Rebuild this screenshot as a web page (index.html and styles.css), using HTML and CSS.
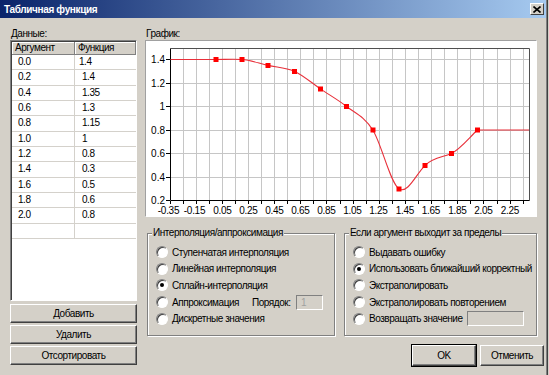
FILE: index.html
```html
<!DOCTYPE html>
<html lang="ru">
<head>
    <meta charset="UTF-8">
    <meta name="viewport" content="width=device-width, initial-scale=1.0">
    <title>Табличная функция</title>

    <link rel="stylesheet" href="styles.css">
</head>
<body>
    <div class="window">
        <!-- title bar -->
        <div class="titlebar">
            <span>Табличная функция</span>
            <span class="close">
                <svg width="8" height="7" viewBox="0 0 8 7"><path d="M0.5 0.5L7.5 6.5M7.5 0.5L0.5 6.5" stroke="#000" stroke-width="1.6"/></svg>
            </span>
        </div>

        <div class="main">
            <!-- data table -->
            <div class="left">
                <div class="caption">Данные:</div>
                <div class="grid">
                    <div class="row head">
                        <div class="cell c1">Аргумент</div>
                        <div class="cell c2">Функция</div>
                    </div>
                    <div class="row"><div class="cell c1">0.0</div><div class="cell c2 edit">1.4</div></div>
                    <div class="row"><div class="cell c1">0.2</div><div class="cell c2">1.4</div></div>
                    <div class="row"><div class="cell c1">0.4</div><div class="cell c2">1.35</div></div>
                    <div class="row"><div class="cell c1">0.6</div><div class="cell c2">1.3</div></div>
                    <div class="row"><div class="cell c1">0.8</div><div class="cell c2">1.15</div></div>
                    <div class="row"><div class="cell c1">1.0</div><div class="cell c2">1</div></div>
                    <div class="row"><div class="cell c1">1.2</div><div class="cell c2">0.8</div></div>
                    <div class="row"><div class="cell c1">1.4</div><div class="cell c2">0.3</div></div>
                    <div class="row"><div class="cell c1">1.6</div><div class="cell c2">0.5</div></div>
                    <div class="row"><div class="cell c1">1.8</div><div class="cell c2">0.6</div></div>
                    <div class="row"><div class="cell c1">2.0</div><div class="cell c2">0.8</div></div>
                    <div class="row"><div class="cell c1"></div><div class="cell c2"></div></div>
                </div>
                <div class="stack">
                    <div class="btn">Добавить</div>
                    <div class="btn">Удалить</div>
                    <div class="btn">Отсортировать</div>
                </div>
            </div>

            <div class="right">
                <div class="caption">График:</div>
                <!-- chart -->
                <div class="chart">
                    <svg width="390" height="175" viewBox="146 41 390 175">
                        <path fill="none" stroke="#c6c6c6" d="M183.5 48.5V200.5M196.5 48.5V200.5M209.5 48.5V200.5M222.5 48.5V200.5M235.5 48.5V200.5M248.5 48.5V200.5M261.5 48.5V200.5M274.5 48.5V200.5M287.5 48.5V200.5M300.5 48.5V200.5M313.5 48.5V200.5M326.5 48.5V200.5M340.5 48.5V200.5M353.5 48.5V200.5M366.5 48.5V200.5M379.5 48.5V200.5M392.5 48.5V200.5M405.5 48.5V200.5M418.5 48.5V200.5M431.5 48.5V200.5M444.5 48.5V200.5M457.5 48.5V200.5M470.5 48.5V200.5M483.5 48.5V200.5M497.5 48.5V200.5M510.5 48.5V200.5M523.5 48.5V200.5M170.5 59.5H529.5M170.5 83.5H529.5M170.5 106.5H529.5M170.5 130.5H529.5M170.5 153.5H529.5M170.5 177.5H529.5"/>
                        <path fill="none" stroke="#505050" d="M170.5 48.5H529.5V200.5"/>
                        <path fill="none" stroke="#000" d="M170.5 48.5V200.5H529.5M166 59.5H170M166 83.5H170M166 106.5H170M166 130.5H170M166 153.5H170M166 177.5H170M166 200.5H170M170.5 201V204M183.5 201V204M196.5 201V204M209.5 201V204M222.5 201V204M235.5 201V204M248.5 201V204M261.5 201V204M274.5 201V204M287.5 201V204M300.5 201V204M313.5 201V204M326.5 201V204M340.5 201V204M353.5 201V204M366.5 201V204M379.5 201V204M392.5 201V204M405.5 201V204M418.5 201V204M431.5 201V204M444.5 201V204M457.5 201V204M470.5 201V204M483.5 201V204M497.5 201V204M510.5 201V204M523.5 201V204"/>
                        <g class="ylabels">
                            <text x="165" y="63">1.4</text>
                            <text x="165" y="87">1.2</text>
                            <text x="165" y="110">1</text>
                            <text x="165" y="134">0.8</text>
                            <text x="165" y="157">0.6</text>
                            <text x="165" y="181">0.4</text>
                            <text x="165" y="204">0.2</text>
                        </g>
                        <g class="xlabels">
                            <text x="168.5" y="214">-0.35</text>
                            <text x="194.5" y="214">-0.15</text>
                            <text x="222.5" y="214">0.05</text>
                            <text x="248.5" y="214">0.25</text>
                            <text x="274.5" y="214">0.45</text>
                            <text x="300.5" y="214">0.65</text>
                            <text x="326.5" y="214">0.85</text>
                            <text x="352.5" y="214">1.05</text>
                            <text x="378.5" y="214">1.25</text>
                            <text x="405" y="214">1.45</text>
                            <text x="431" y="214">1.65</text>
                            <text x="457.5" y="214">1.85</text>
                            <text x="483.5" y="214">2.05</text>
                            <text x="510" y="214">2.25</text>
                        </g>
                        <path fill="none" stroke="#e8303a" stroke-width="1.1" d="M170.5 59.5L215.8 59.5C224.5 59.5 233.2 59 241.9 59.5C250.6 60 259.4 63.5 268.1 65.4C276.8 67.4 285.6 67.3 294.3 71.2C303 75.1 311.7 83 320.4 88.9C329.1 94.8 337.9 99.7 346.6 106.5C355.3 113.4 364.1 116.3 372.8 130C381.5 143.7 390.2 182.9 398.9 188.8C407.6 194.7 416.4 173.6 425.1 165.3C433.8 157 442.6 157.5 451.3 153.5C460 149.5 468.7 138.3 477.4 130L529 130"/>
                        <g fill="#f00">
                            <rect x="213.5" y="57" width="5" height="5"/>
                            <rect x="239.5" y="57" width="5" height="5"/>
                            <rect x="265.5" y="63" width="5" height="5"/>
                            <rect x="292" y="69" width="5" height="5"/>
                            <rect x="318" y="86.5" width="5" height="5"/>
                            <rect x="344" y="104" width="5" height="5"/>
                            <rect x="370.5" y="127.5" width="5" height="5"/>
                            <rect x="396.5" y="186.5" width="5" height="5"/>
                            <rect x="422.5" y="163" width="5" height="5"/>
                            <rect x="449" y="151" width="5" height="5"/>
                            <rect x="475" y="127.5" width="5" height="5"/>
                        </g>
                    </svg>
                </div>

                <!-- option groups -->
                <div class="groups">
                    <div class="group g1">
                        <span class="legend">Интерполяция/аппроксимация</span>
                        <div class="opt"><span class="radio"></span>Ступенчатая интерполяция</div>
                        <div class="opt"><span class="radio"></span>Линейная интерполяция</div>
                        <div class="opt"><span class="radio on"></span>Сплайн-интерполяция</div>
                        <div class="opt"><span class="radio"></span><span class="wide">Аппроксимация</span><span class="order">Порядок:</span><span class="field small">1</span></div>
                        <div class="opt"><span class="radio"></span>Дискретные значения</div>
                    </div>
                    <div class="group g2">
                        <span class="legend">Если аргумент выходит за пределы</span>
                        <div class="opt"><span class="radio"></span>Выдавать ошибку</div>
                        <div class="opt"><span class="radio on"></span>Использовать ближайший корректный</div>
                        <div class="opt"><span class="radio"></span>Экстраполировать</div>
                        <div class="opt"><span class="radio"></span>Экстраполировать повторением</div>
                        <div class="opt"><span class="radio"></span><span class="wide2">Возвращать значение</span><span class="field large"></span></div>
                    </div>
                </div>

                <div class="actions">
                    <div class="btn default">OK</div>
                    <div class="btn">Отменить</div>
                </div>
            </div>
        </div>
    </div>
</body>
</html>
```

FILE: styles.css
```css
body {
    margin: 0;
    background-color: #d4d0c8;
    font-family: "Liberation Sans", Tahoma, sans-serif;
    font-size: 10px;
    letter-spacing: -0.45px;
    color: #000;
}
.window {
    width: 549px;
    height: 375px;
    box-sizing: border-box;
    padding-right: 3px;
    overflow: hidden;
    background-color: #d4d0c8;
    box-shadow: inset -1px 0 #d4d0c8, inset -2px 0 #404040, inset -3px 0 #808080;
}
.titlebar {
    height: 18px;
    display: flex;
    align-items: center;
    justify-content: space-between;
    padding: 0 2px 0 4px;
    background: linear-gradient(to right, #0a246a, #a6caf0);
    color: #fff;
    font-weight: bold;
    letter-spacing: -0.35px;
}
.close {
    width: 14px;
    height: 12px;
    box-sizing: border-box;
    display: flex;
    align-items: center;
    justify-content: center;
    background-color: #d4d0c8;
    border: 1px solid;
    border-color: #fff #404040 #404040 #fff;
}
.main {
    display: flex;
    gap: 8px;
    padding: 10px 0 0 10px;
}
.caption {
    height: 12px;
    line-height: 12px;
    padding-left: 1px;
}

/* data table */
.left {
    width: 127px;
}
.grid {
    height: 261px;
    box-sizing: border-box;
    padding: 1px 0 0 1px;
    background-color: #fff;
    border: 1px solid;
    border-color: #808080 #fff #fff #808080;
    box-shadow: inset 1px 1px #404040;
}
.row {
    display: flex;
    height: 15.35px;
    box-sizing: border-box;
    border-bottom: 1px solid #d4d1cb;
    line-height: 14px;
}
.cell {
    box-sizing: border-box;
}
.c1 {
    width: 63px;
    padding-left: 6px;
    border-right: 1px solid #d4d1cb;
}
.c2 {
    flex: 1;
    padding-left: 7px;
}
.c2.edit {
    padding-left: 4px;
}
.row.head {
    height: 13px;
    line-height: 12px;
    border-bottom: none;
}
.head .cell {
    background-color: #d4d0c8;
    border-right: 1px solid #808080;
    border-bottom: 1px solid #808080;
    box-shadow: inset 1px 1px #fff;
    padding-left: 3px;
}
.stack {
    display: flex;
    flex-direction: column;
    gap: 2px;
    margin-top: 3px;
}
.btn {
    height: 19px;
    box-sizing: border-box;
    display: flex;
    align-items: center;
    justify-content: center;
    background-color: #d4d0c8;
    border: 1px solid;
    border-color: #fff #404040 #404040 #fff;
    box-shadow: inset -1px -1px #808080;
}

/* chart */
.right {
    width: 392px;
}
.chart {
    height: 177px;
    box-sizing: border-box;
    background-color: #fff;
    border: 1px solid;
    border-color: #a0a0a0 #fff #fff #a0a0a0;
}
.chart svg {
    display: block;
    font-family: "Liberation Sans", Tahoma, sans-serif;
    font-size: 10px;
    letter-spacing: 0;
}
.ylabels text {
    text-anchor: end;
}
.xlabels text {
    text-anchor: middle;
    letter-spacing: -0.3px;
}

/* option groups */
.groups {
    display: flex;
    gap: 9px;
    margin-top: 16px;
    padding-left: 2px;
}
.group {
    position: relative;
    height: 103px;
    box-sizing: border-box;
    padding: 10px 0 0 8px;
    border: 1px solid #808080;
    box-shadow: inset 1px 1px #fff, 1px 1px #fff;
    white-space: nowrap;
}
.g1 {
    width: 188px;
}
.g2 {
    width: 193px;
}
.legend {
    position: absolute;
    top: -7px;
    left: 4px;
    padding: 0 1px;
    line-height: 12px;
    background-color: #d4d0c8;
}
.opt {
    display: flex;
    align-items: center;
    gap: 4px;
    height: 16.6px;
}
.radio {
    position: relative;
    width: 12px;
    height: 12px;
    flex: none;
    box-sizing: border-box;
    border-radius: 50%;
    background-color: #fff;
    border: 1px solid;
    border-color: #808080 #fff #fff #808080;
    box-shadow: inset 1px 1px #404040;
}
.radio.on::after {
    content: "";
    position: absolute;
    left: 3px;
    top: 3px;
    width: 4px;
    height: 4px;
    border-radius: 50%;
    background-color: #000;
}
.wide {
    width: 76px;
}
.order {
    width: 40px;
}
.wide2 {
    width: 94px;
}
.field {
    height: 15px;
    box-sizing: border-box;
    padding-left: 4px;
    line-height: 13px;
    color: #a0a0a0;
    border: 1px solid;
    border-color: #808080 #fff #fff #808080;
}
.field.small {
    width: 27px;
}
.field.large {
    width: 57px;
}

.actions {
    display: flex;
    justify-content: flex-end;
    gap: 4px;
    margin: 9px -7px 0 0;
}
.actions .btn {
    width: 64px;
    height: 21px;
}
.btn.default {
    outline: 1px solid #000;
    outline-offset: 0;
}
```
